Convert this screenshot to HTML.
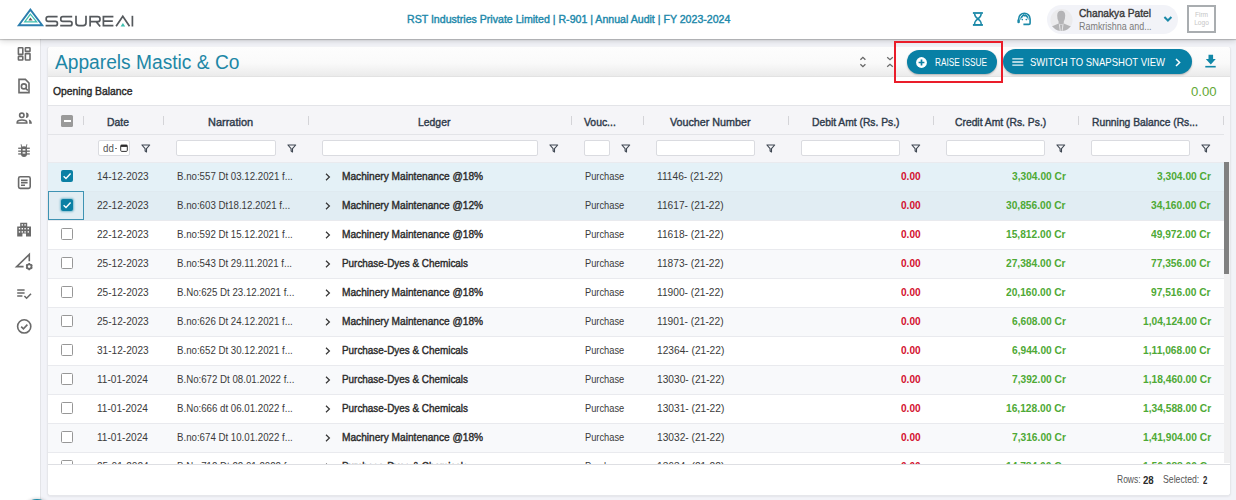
<!DOCTYPE html><html><head><meta charset="utf-8"><style>
*{margin:0;padding:0;box-sizing:border-box}
html,body{width:1236px;height:500px;overflow:hidden;background:#f2f3f8;font-family:"Liberation Sans",sans-serif;color:#333}
svg{display:block}
.a{position:absolute}
.t{position:absolute;white-space:nowrap;line-height:16px}
#hdr{left:0;top:0;width:1236px;height:39px;background:#fff;box-shadow:0 1px 1px rgba(0,0,0,.18),0 2px 6px rgba(0,0,0,.16);z-index:5}
#side{left:0;top:39px;width:41px;height:461px;background:#fff;border-right:1px solid #e3e4e8;z-index:4}
#card{left:47px;top:46px;width:1184px;height:450px;background:#fff;border:1px solid #e6e7eb;border-top-color:#f2f3f6;border-radius:4px;overflow:hidden;box-shadow:0 1px 2px rgba(0,0,0,.06)}
.ttl{left:0;top:0;width:1182px;height:30px;background:linear-gradient(#fdfdfd,#fafafa 55%,#ebebeb);border-bottom:1px solid #e2e2e2}
.btn{background:#0880a5;border-radius:13px;box-shadow:0 1px 2px rgba(0,0,0,.25)}
.hrow{background:#f5f5f8}
.sep{width:1px;height:9px;background:#d4d4d8}
.inp{height:16px;background:#fff;border:1px solid #dadbe0;border-radius:2px}
.row{height:30px;border-top:1px solid #e9eaee}
.cb{width:12px;height:12px;border:1.5px solid #979797;border-radius:1.5px;background:#fff}
.cbc{width:12px;height:12px;background:#0b80a4;border-radius:2px}
</style></head><body>
<div id="hdr" class="a">
<svg class="a" style="left:0;top:0" width="140" height="39" viewBox="0 0 140 39">
<path d="M30.4 9.6 L18.8 25.2 H42.2 Z" fill="none" stroke="#2b7eae" stroke-width="1.9" stroke-linejoin="miter"/>
<path d="M30.4 14.2 L24.8 21.8 H36.6 Z" fill="none" stroke="#3dbfae" stroke-width="1.3"/>
<path d="M30.4 17.6 L28.4 20.6 H32.6 Z" fill="#5a5a5a"/>
<g fill="none" stroke="#55595d" stroke-width="1.7">
<path d="M57.6 16.6 H48.2 Q46.2 16.6 46.2 18.6 V19.4 Q46.2 21.3 48.2 21.3 H55.4 Q57.4 21.3 57.4 23.3 V23.7 Q57.4 25.7 55.4 25.7 H45.6"/>
<path d="M72.2 16.6 H62.8 Q60.8 16.6 60.8 18.6 V19.4 Q60.8 21.3 62.8 21.3 H70 Q72 21.3 72 23.3 V23.7 Q72 25.7 70 25.7 H60.2"/>
<path d="M76 15.8 V22.8 Q76 25.7 78.9 25.7 H83.1 Q86 25.7 86 22.8 V15.8"/>
<path d="M90.1 26.5 V16.6 H97.6 Q100 16.6 100 18.9 V19.4 Q100 21.7 97.6 21.7 H90.1 M96.2 21.7 L100.2 26.5"/>
<path d="M113.4 16.6 H103.4 V25.7 H113.4 M103.4 21.1 H112.8"/>
<path d="M116.1 26.3 L122.8 16.2 L129.5 26.3"/>
<path d="M132.4 15.8 V26.5"/>
</g>
<path d="M122.9 23 L120.6 26.4 H125.2 Z" fill="#3dbfae"/>
</svg>
<div class="t" style="left:406.80px;top:10.76px;font-size:10.8px;color:#2088aa;transform:scaleX(0.9808);transform-origin:left top;-webkit-text-stroke:0.4px #2088aa;">RST Industries Private Limited | R-901 | Annual Audit | FY 2023-2024</div>
<svg class="a" style="left:970px;top:10px" width="16" height="18" viewBox="970 10 16 18"><g fill="#1b89a8"><rect x="972.9" y="12.1" width="10" height="1.8"/><rect x="972.9" y="24" width="10" height="1.9"/></g><path d="M974.6 13.8 Q974.6 16.6 977.9 18.9 Q981.2 21.2 981.2 24 M981.2 13.8 Q981.2 16.6 977.9 18.9 Q974.6 21.2 974.6 24" fill="none" stroke="#1b89a8" stroke-width="1.5"/></svg>
<svg class="a" style="left:1012px;top:8px" width="24" height="20" viewBox="1012 8 24 20"><g fill="none" stroke="#1b89a8"><path d="M1018.7 22.4 V18.9 A5.7 5.7 0 0 1 1030.1 18.9 V23.2 Q1030.1 24.4 1028.9 24.4 H1023.4" stroke-width="1.6"/><path d="M1020.6 19.6 A3.8 4.6 0 0 1 1028.2 19.6" stroke-width="0.9"/><path d="M1021.3 17.8 Q1022.4 15.6 1023.6 15 Q1024.4 16.6 1025.4 15.2 Q1026.9 15.8 1027.7 17.8" stroke-width="1.5"/></g><rect x="1017.4" y="19.3" width="2.3" height="4" rx="1.1" fill="#1b89a8"/><circle cx="1022.3" cy="19.6" r="0.8" fill="#1b89a8"/><circle cx="1026.3" cy="19.6" r="0.8" fill="#1b89a8"/></svg>
<div class="a" style="left:1047px;top:4.6px;width:131px;height:29px;background:#f2f3f8;border-radius:14.5px"></div>
<svg class="a" style="left:1049px;top:7px" width="25" height="26" viewBox="1049 7 25 26"><defs><clipPath id="av"><circle cx="1061.5" cy="20" r="11.1"/></clipPath></defs><circle cx="1061.5" cy="20" r="11.1" fill="#ebebed"/><g clip-path="url(#av)"><path fill="#b4b4b6" d="M1061.2 10.8 Q1065.2 10.8 1065.2 15.5 Q1065.2 19.5 1063.8 21.5 V23.6 L1061.2 24.5 L1058.6 23.6 V21.5 Q1057.2 19.5 1057.2 15.5 Q1057.2 10.8 1061.2 10.8 Z"/><path fill="#b4b4b6" d="M1050 27.2 L1058.6 23.6 L1061.2 25 L1063.8 23.6 L1072.6 27.2 V33 H1050 Z"/><path d="M1059.4 24.2 L1060.4 32 M1063 24.2 L1062 32" stroke="#ebebed" stroke-width="0.9"/></g></svg>
<div class="t" style="left:1078.70px;top:4.82px;font-size:11.5px;color:#383838;transform:scaleX(0.8856);transform-origin:left top;-webkit-text-stroke:0.4px #383838;">Chanakya Patel</div>
<div class="t" style="left:1078.70px;top:17.99px;font-size:11px;color:#7b7b7b;transform:scaleX(0.8133);transform-origin:left top;">Ramkrishna and...</div>
<svg class="a" style="left:1162px;top:14px" width="12" height="10" viewBox="1162 14 12 10"><path d="M1164.4 17 L1167.9 20.5 L1171.4 17" fill="none" stroke="#1b89a8" stroke-width="2"/></svg>
<div class="a" style="left:1187px;top:4.8px;width:28.7px;height:28.3px;border:2px solid #a9adb0;background:#fff"></div>
<div class="t" style="left:1190px;top:11px;width:23px;text-align:center;font-size:6.6px;line-height:8px;color:#c6c6c6">Firm<br>Logo</div>
</div>
<div id="side" class="a">
<svg class="a" style="left:0;top:0" width="41" height="461" viewBox="0 39 41 461"><g fill="none" stroke="#6a6a6a" stroke-width="1.6">
<rect x="18.4" y="47.8" width="4.4" height="6.6" rx="0.5"/><rect x="25.4" y="47.8" width="4.6" height="3.6" rx="0.5"/><rect x="18.4" y="56.4" width="4.4" height="3.6" rx="0.5"/><rect x="25.4" y="53.6" width="4.6" height="6.4" rx="0.5"/>
<path d="M19 79.4 H25.4 L29 83 V92.6 H19 Z"/><circle cx="23.9" cy="86.4" r="2.5"/><path d="M25.6 88.2 L27.8 90.4"/>
<circle cx="21.8" cy="115.3" r="2.2"/><path d="M17.2 123 V122.4 Q17.2 120 22 120 Q26.8 120 26.8 122.4 V123 Z"/>

<rect x="18.6" y="176.8" width="11.6" height="11.6" rx="1.6"/>
<path d="M21 180.4 H27.6 M21 182.8 H27.6 M21 185.2 H25"/>
<path d="M23.6 266.6 H16.6 L29.3 254.4 V261.2" stroke-linejoin="miter"/><circle cx="29.2" cy="266.6" r="2.3" stroke-width="1.8"/><path d="M29.2 263 V270.2 M26.1 264.8 L32.3 268.4 M26.1 268.4 L32.3 264.8" stroke-width="1.6" stroke-dasharray="1.3 4.6"/>
<circle cx="24.2" cy="326.4" r="6.6"/><path d="M21.2 326.6 L23.4 328.8 L27.4 324.6"/>
<path d="M17.2 290 H24.6 M17.2 293 H24.6 M17.2 296 H22.4 M24.4 296 L26.6 298.2 L31 293.8"/>
</g>
<g fill="#6a6a6a">
<path d="M21 148.2 Q21 146.2 24 146.2 Q27 146.2 27 148.2 V154 Q27 156.9 24 156.9 Q21 156.9 21 154 Z"/><rect x="18.2" y="147.6" width="11.6" height="1.3"/><rect x="18.2" y="150.5" width="11.6" height="1.3"/><rect x="18.2" y="153.3" width="11.6" height="1.3"/><path d="M21.3 144 L22.3 147 H25.7 L26.7 144 L27.4 144.4 L26.6 147.6 H21.4 L20.6 144.4 Z"/>
<path d="M25.9 112.4 A2.7 2.7 0 0 1 25.9 117.9 Q26.9 115.2 25.9 112.4 Z"/><path d="M28.8 119.6 Q31.9 120.4 31.9 123.8 H29.2 Q29.4 121.4 28.8 119.6 Z"/>
<path d="M20.2 222.8 H27.2 V226.6 H31 V236.4 H26 V233.6 H22.4 V236.4 H17.2 V226.6 H20.2 Z"/>
</g>
<g fill="#fff"><rect x="22.6" y="149.1" width="2.8" height="1.4"/><rect x="22.6" y="152.2" width="2.8" height="1.4"/>
<rect x="21.6" y="224.2" width="1.4" height="1.4"/><rect x="24.4" y="224.2" width="1.4" height="1.4"/><rect x="18.8" y="228" width="1.4" height="1.4"/><rect x="21.6" y="228" width="1.4" height="1.4"/><rect x="24.4" y="228" width="1.4" height="1.4"/><rect x="27.6" y="228" width="1.4" height="1.4"/><rect x="18.8" y="231.2" width="1.4" height="1.4"/><rect x="21.6" y="231.2" width="1.4" height="1.4"/><rect x="24.4" y="231.2" width="1.4" height="1.4"/><rect x="27.6" y="231.2" width="1.4" height="1.4"/></g>
</svg>
</div>
<div id="card" class="a">
<div class="a ttl"></div>
<div class="t" style="left:7.00px;top:7.24px;font-size:19.5px;color:#1d87a6;transform:scaleX(0.9835);transform-origin:left top;">Apparels Mastic &amp; Co</div>
<svg class="a" style="left:811px;top:9px" width="8" height="12" viewBox="0 0 8 12"><path d="M1.4 3.7 L3.9 1.3 L6.4 3.7 M1.4 8.3 L3.9 10.7 L6.4 8.3" fill="none" stroke="#666" stroke-width="1.3"/></svg>
<svg class="a" style="left:838px;top:9px" width="8" height="12" viewBox="0 0 8 12"><path d="M1.2 1.2 L4 3.8 L6.8 1.2 M1.2 10.8 L4 8.2 L6.8 10.8" fill="none" stroke="#6b6b6b" stroke-width="1.2"/></svg>
<div class="a btn" style="left:859px;top:2.5px;width:90px;height:24.2px"></div>
<svg class="a" style="left:868px;top:9.5px" width="11" height="11" viewBox="0 0 11 11"><circle cx="5.5" cy="5.5" r="5.4" fill="#fff"/><path d="M5.5 2.6 V8.4 M2.6 5.5 H8.4" stroke="#0b80a4" stroke-width="1.7"/></svg>
<div class="t" style="left:886.60px;top:7.73px;font-size:10px;color:#fff;transform:scaleX(0.8264);transform-origin:left top;">RAISE ISSUE</div>
<div class="a btn" style="left:955.4px;top:2.299999999999997px;width:188.6px;height:24.7px"></div>
<svg class="a" style="left:963.5px;top:10px" width="12" height="10" viewBox="0 0 12 10"><path d="M0.3 1.9 H11.3 M0.3 5 H11.3 M0.3 8.1 H11.3" stroke="#e6f4f8" stroke-width="1.4"/></svg>
<div class="t" style="left:982.00px;top:6.56px;font-size:10.5px;color:#fff;transform:scaleX(0.9073);transform-origin:left top;">SWITCH TO SNAPSHOT VIEW</div>
<svg class="a" style="left:1127px;top:11px" width="6" height="9" viewBox="0 0 6 9"><path d="M1 1 L4.6 4.5 L1 8" fill="none" stroke="#fff" stroke-width="1.5"/></svg>
<svg class="a" style="left:1156px;top:7px" width="14" height="15" viewBox="1204 54 14 15"><path d="M1208.5 54.8 H1213.1 V58.9 H1215.8 L1210.8 64.4 L1205.8 58.9 H1208.5 Z" fill="#1288a8"/><rect x="1205.3" y="65.9" width="10.4" height="1.6" fill="#1288a8"/></svg>
<div class="t" style="left:5.30px;top:36.02px;font-size:11.5px;color:#262626;transform:scaleX(0.9007);transform-origin:left top;-webkit-text-stroke:0.4px #262626;">Opening Balance</div>
<div class="t" style="left:1142.80px;top:36.80px;font-size:13px;color:#62a834;transform:scaleX(1.0125);transform-origin:left top;">0.00</div>
<div class="a hrow" style="left:0;top:58px;width:1182px;height:56.6px;border-top:1px solid #e3e4e8"></div>
<div class="a" style="left:0;top:87px;width:1175.6px;height:1px;background:#e3e4e8"></div>
<div class="a" style="left:13px;top:68px;width:12px;height:12px;background:#9a9a9a;border-radius:1.5px"></div>
<div class="a" style="left:15.5px;top:73.3px;width:7px;height:1.6px;background:#fff"></div>
<div class="a sep" style="left:35px;top:69px"></div>
<div class="a sep" style="left:115px;top:69px"></div>
<div class="a sep" style="left:260px;top:69px"></div>
<div class="a sep" style="left:522.5px;top:69px"></div>
<div class="a sep" style="left:595px;top:69px"></div>
<div class="a sep" style="left:740px;top:69px"></div>
<div class="a sep" style="left:885px;top:69px"></div>
<div class="a sep" style="left:1030px;top:69px"></div>
<div class="a sep" style="left:1175px;top:69px"></div>
<div class="t" style="left:59.30px;top:66.59px;font-size:11px;color:#2e3a4a;transform:scaleX(0.9436);transform-origin:left top;-webkit-text-stroke:0.4px #2e3a4a;">Date</div>
<div class="t" style="left:159.80px;top:66.59px;font-size:11px;color:#2e3a4a;transform:scaleX(0.9964);transform-origin:left top;-webkit-text-stroke:0.4px #2e3a4a;">Narration</div>
<div class="t" style="left:369.90px;top:66.59px;font-size:11px;color:#2e3a4a;transform:scaleX(0.9456);transform-origin:left top;-webkit-text-stroke:0.4px #2e3a4a;">Ledger</div>
<div class="t" style="left:536.20px;top:66.59px;font-size:11px;color:#2e3a4a;transform:scaleX(0.9447);transform-origin:left top;-webkit-text-stroke:0.4px #2e3a4a;">Vouc...</div>
<div class="t" style="left:622.00px;top:66.59px;font-size:11px;color:#2e3a4a;transform:scaleX(0.9751);transform-origin:left top;-webkit-text-stroke:0.4px #2e3a4a;">Voucher Number</div>
<div class="t" style="left:763.50px;top:66.59px;font-size:11px;color:#2e3a4a;transform:scaleX(0.9358);transform-origin:left top;-webkit-text-stroke:0.4px #2e3a4a;">Debit Amt (Rs. Ps.)</div>
<div class="t" style="left:906.50px;top:66.59px;font-size:11px;color:#2e3a4a;transform:scaleX(0.9384);transform-origin:left top;-webkit-text-stroke:0.4px #2e3a4a;">Credit Amt (Rs. Ps.)</div>
<div class="t" style="left:1043.60px;top:66.59px;font-size:11px;color:#2e3a4a;transform:scaleX(0.9352);transform-origin:left top;-webkit-text-stroke:0.4px #2e3a4a;">Running Balance (Rs...</div>
<div class="a inp" style="left:50px;top:93.30000000000001px;width:31.69999999999999px"></div>
<div class="a" style="left:93px;top:96.5px"><svg width="10" height="10" viewBox="0 0 10 10"><path d="M0.9 1 H8.7 L5.5 4.6 V7.9 L4.1 7.1 V4.6 Z" fill="none" stroke="#3f4752" stroke-width="1.1" stroke-linejoin="round"/></svg></div>
<div class="a inp" style="left:128px;top:93.30000000000001px;width:99.69999999999999px"></div>
<div class="a" style="left:239px;top:96.5px"><svg width="10" height="10" viewBox="0 0 10 10"><path d="M0.9 1 H8.7 L5.5 4.6 V7.9 L4.1 7.1 V4.6 Z" fill="none" stroke="#3f4752" stroke-width="1.1" stroke-linejoin="round"/></svg></div>
<div class="a inp" style="left:274px;top:93.30000000000001px;width:215.70000000000005px"></div>
<div class="a" style="left:501px;top:96.5px"><svg width="10" height="10" viewBox="0 0 10 10"><path d="M0.9 1 H8.7 L5.5 4.6 V7.9 L4.1 7.1 V4.6 Z" fill="none" stroke="#3f4752" stroke-width="1.1" stroke-linejoin="round"/></svg></div>
<div class="a inp" style="left:536px;top:93.30000000000001px;width:25.700000000000045px"></div>
<div class="a" style="left:573px;top:96.5px"><svg width="10" height="10" viewBox="0 0 10 10"><path d="M0.9 1 H8.7 L5.5 4.6 V7.9 L4.1 7.1 V4.6 Z" fill="none" stroke="#3f4752" stroke-width="1.1" stroke-linejoin="round"/></svg></div>
<div class="a inp" style="left:608px;top:93.30000000000001px;width:98.70000000000005px"></div>
<div class="a" style="left:718px;top:96.5px"><svg width="10" height="10" viewBox="0 0 10 10"><path d="M0.9 1 H8.7 L5.5 4.6 V7.9 L4.1 7.1 V4.6 Z" fill="none" stroke="#3f4752" stroke-width="1.1" stroke-linejoin="round"/></svg></div>
<div class="a inp" style="left:753px;top:93.30000000000001px;width:98.70000000000005px"></div>
<div class="a" style="left:863px;top:96.5px"><svg width="10" height="10" viewBox="0 0 10 10"><path d="M0.9 1 H8.7 L5.5 4.6 V7.9 L4.1 7.1 V4.6 Z" fill="none" stroke="#3f4752" stroke-width="1.1" stroke-linejoin="round"/></svg></div>
<div class="a inp" style="left:898px;top:93.30000000000001px;width:98.70000000000005px"></div>
<div class="a" style="left:1008px;top:96.5px"><svg width="10" height="10" viewBox="0 0 10 10"><path d="M0.9 1 H8.7 L5.5 4.6 V7.9 L4.1 7.1 V4.6 Z" fill="none" stroke="#3f4752" stroke-width="1.1" stroke-linejoin="round"/></svg></div>
<div class="a inp" style="left:1043px;top:93.30000000000001px;width:98.70000000000005px"></div>
<div class="a" style="left:1153px;top:96.5px"><svg width="10" height="10" viewBox="0 0 10 10"><path d="M0.9 1 H8.7 L5.5 4.6 V7.9 L4.1 7.1 V4.6 Z" fill="none" stroke="#3f4752" stroke-width="1.1" stroke-linejoin="round"/></svg></div>
<div class="t" style="left:54.80px;top:92.99px;font-size:11px;color:#555;transform:scaleX(0.8845);transform-origin:left top;">dd</div>
<div class="a" style="left:67.2px;top:101px;width:2px;height:1px;background:#777"></div>
<svg class="a" style="left:72px;top:97px" width="8" height="8" viewBox="0 0 8 8"><rect x="0.7" y="1.2" width="6.6" height="6.2" rx="1" fill="none" stroke="#333" stroke-width="1"/><rect x="0.7" y="0.8" width="6.6" height="2.1" fill="#2a2a2a"/></svg>
<div class="a row" style="left:0;top:114.60px;width:1176px;background:#e4f1f7"></div>
<div class="a cbc" style="left:13px;top:122.90px"></div>
<svg class="a" style="left:13px;top:122.90px" width="12" height="12" viewBox="0 0 12 12"><path d="M2.6 6.2 L5 8.4 L9.6 3.6" fill="none" stroke="#fff" stroke-width="1.4"/></svg>
<div class="t" style="left:49.20px;top:120.99px;font-size:11px;color:#3a3a3a;transform:scaleX(0.9171);transform-origin:left top;">14-12-2023</div>
<div class="t" style="left:129.00px;top:120.99px;font-size:11px;color:#3a3a3a;transform:scaleX(0.8806);transform-origin:left top;">B.no:557 Dt 03.12.2021 f...</div>
<svg class="a" style="left:276.5px;top:125.60px" width="6" height="8" viewBox="0 0 6 8"><path d="M1 0.8 L4.4 4 L1 7.2" fill="none" stroke="#333" stroke-width="1.2"/></svg>
<div class="t" style="left:294.40px;top:120.99px;font-size:11px;color:#2a2a2a;transform:scaleX(0.9222);transform-origin:left top;-webkit-text-stroke:0.4px #2a2a2a;">Machinery Maintenance @18%</div>
<div class="t" style="left:536.70px;top:120.99px;font-size:11px;color:#3a3a3a;transform:scaleX(0.8445);transform-origin:left top;">Purchase</div>
<div class="t" style="left:609.00px;top:120.99px;font-size:11px;color:#3a3a3a;transform:scaleX(0.9253);transform-origin:left top;">11146- (21-22)</div>
<div class="t" style="left:852.70px;top:120.99px;font-size:11px;font-weight:700;color:#d3102e;transform:scaleX(0.9161);transform-origin:left top;">0.00</div>
<div class="t" style="left:963.90px;top:120.99px;font-size:11px;font-weight:700;color:#4ea935;transform:scaleX(0.9280);transform-origin:left top;">3,304.00 Cr</div>
<div class="t" style="left:1108.70px;top:120.99px;font-size:11px;font-weight:700;color:#4ea935;transform:scaleX(0.9280);transform-origin:left top;">3,304.00 Cr</div>
<div class="a row" style="left:0;top:143.63px;width:1176px;background:#e1edf3;border-top-color:#dfeaf0"></div>
<div class="a cbc" style="left:13px;top:151.93px;box-shadow:0 0 2px 1px rgba(11,128,164,.45)"></div>
<svg class="a" style="left:13px;top:151.93px" width="12" height="12" viewBox="0 0 12 12"><path d="M2.6 6.2 L5 8.4 L9.6 3.6" fill="none" stroke="#fff" stroke-width="1.4"/></svg>
<div class="t" style="left:49.20px;top:150.02px;font-size:11px;color:#3a3a3a;transform:scaleX(0.9171);transform-origin:left top;">22-12-2023</div>
<div class="t" style="left:129.00px;top:150.02px;font-size:11px;color:#3a3a3a;transform:scaleX(0.8806);transform-origin:left top;">B.no:603 Dt18.12.2021 f...</div>
<svg class="a" style="left:276.5px;top:154.63px" width="6" height="8" viewBox="0 0 6 8"><path d="M1 0.8 L4.4 4 L1 7.2" fill="none" stroke="#333" stroke-width="1.2"/></svg>
<div class="t" style="left:294.40px;top:150.02px;font-size:11px;color:#2a2a2a;transform:scaleX(0.9222);transform-origin:left top;-webkit-text-stroke:0.4px #2a2a2a;">Machinery Maintenance @12%</div>
<div class="t" style="left:536.70px;top:150.02px;font-size:11px;color:#3a3a3a;transform:scaleX(0.8445);transform-origin:left top;">Purchase</div>
<div class="t" style="left:609.00px;top:150.02px;font-size:11px;color:#3a3a3a;transform:scaleX(0.9253);transform-origin:left top;">11617- (21-22)</div>
<div class="t" style="left:852.70px;top:150.02px;font-size:11px;font-weight:700;color:#d3102e;transform:scaleX(0.9161);transform-origin:left top;">0.00</div>
<div class="t" style="left:958.18px;top:150.02px;font-size:11px;font-weight:700;color:#4ea935;transform:scaleX(0.9280);transform-origin:left top;">30,856.00 Cr</div>
<div class="t" style="left:1102.98px;top:150.02px;font-size:11px;font-weight:700;color:#4ea935;transform:scaleX(0.9280);transform-origin:left top;">34,160.00 Cr</div>
<div class="a row" style="left:0;top:172.66px;width:1176px;background:#ffffff"></div>
<div class="a cb" style="left:13px;top:180.96px"></div>
<div class="t" style="left:49.20px;top:179.05px;font-size:11px;color:#3a3a3a;transform:scaleX(0.9171);transform-origin:left top;">22-12-2023</div>
<div class="t" style="left:129.00px;top:179.05px;font-size:11px;color:#3a3a3a;transform:scaleX(0.8806);transform-origin:left top;">B.no:592 Dt 15.12.2021 f...</div>
<svg class="a" style="left:276.5px;top:183.66px" width="6" height="8" viewBox="0 0 6 8"><path d="M1 0.8 L4.4 4 L1 7.2" fill="none" stroke="#333" stroke-width="1.2"/></svg>
<div class="t" style="left:294.40px;top:179.05px;font-size:11px;color:#2a2a2a;transform:scaleX(0.9222);transform-origin:left top;-webkit-text-stroke:0.4px #2a2a2a;">Machinery Maintenance @18%</div>
<div class="t" style="left:536.70px;top:179.05px;font-size:11px;color:#3a3a3a;transform:scaleX(0.8445);transform-origin:left top;">Purchase</div>
<div class="t" style="left:609.00px;top:179.05px;font-size:11px;color:#3a3a3a;transform:scaleX(0.9253);transform-origin:left top;">11618- (21-22)</div>
<div class="t" style="left:852.70px;top:179.05px;font-size:11px;font-weight:700;color:#d3102e;transform:scaleX(0.9161);transform-origin:left top;">0.00</div>
<div class="t" style="left:958.18px;top:179.05px;font-size:11px;font-weight:700;color:#4ea935;transform:scaleX(0.9280);transform-origin:left top;">15,812.00 Cr</div>
<div class="t" style="left:1102.98px;top:179.05px;font-size:11px;font-weight:700;color:#4ea935;transform:scaleX(0.9280);transform-origin:left top;">49,972.00 Cr</div>
<div class="a row" style="left:0;top:201.69px;width:1176px;background:#f8f9fb"></div>
<div class="a cb" style="left:13px;top:209.99px"></div>
<div class="t" style="left:49.20px;top:208.08px;font-size:11px;color:#3a3a3a;transform:scaleX(0.9171);transform-origin:left top;">25-12-2023</div>
<div class="t" style="left:129.00px;top:208.08px;font-size:11px;color:#3a3a3a;transform:scaleX(0.8806);transform-origin:left top;">B.no:543 Dt 29.11.2021 f...</div>
<svg class="a" style="left:276.5px;top:212.69px" width="6" height="8" viewBox="0 0 6 8"><path d="M1 0.8 L4.4 4 L1 7.2" fill="none" stroke="#333" stroke-width="1.2"/></svg>
<div class="t" style="left:294.40px;top:208.08px;font-size:11px;color:#2a2a2a;transform:scaleX(0.9002);transform-origin:left top;-webkit-text-stroke:0.4px #2a2a2a;">Purchase-Dyes &amp; Chemicals</div>
<div class="t" style="left:536.70px;top:208.08px;font-size:11px;color:#3a3a3a;transform:scaleX(0.8445);transform-origin:left top;">Purchase</div>
<div class="t" style="left:609.00px;top:208.08px;font-size:11px;color:#3a3a3a;transform:scaleX(0.9253);transform-origin:left top;">11873- (21-22)</div>
<div class="t" style="left:852.70px;top:208.08px;font-size:11px;font-weight:700;color:#d3102e;transform:scaleX(0.9161);transform-origin:left top;">0.00</div>
<div class="t" style="left:958.18px;top:208.08px;font-size:11px;font-weight:700;color:#4ea935;transform:scaleX(0.9280);transform-origin:left top;">27,384.00 Cr</div>
<div class="t" style="left:1102.98px;top:208.08px;font-size:11px;font-weight:700;color:#4ea935;transform:scaleX(0.9280);transform-origin:left top;">77,356.00 Cr</div>
<div class="a row" style="left:0;top:230.72px;width:1176px;background:#ffffff"></div>
<div class="a cb" style="left:13px;top:239.02px"></div>
<div class="t" style="left:49.20px;top:237.11px;font-size:11px;color:#3a3a3a;transform:scaleX(0.9171);transform-origin:left top;">25-12-2023</div>
<div class="t" style="left:129.00px;top:237.11px;font-size:11px;color:#3a3a3a;transform:scaleX(0.8806);transform-origin:left top;">B.No:625 Dt 23.12.2021 f...</div>
<svg class="a" style="left:276.5px;top:241.72px" width="6" height="8" viewBox="0 0 6 8"><path d="M1 0.8 L4.4 4 L1 7.2" fill="none" stroke="#333" stroke-width="1.2"/></svg>
<div class="t" style="left:294.40px;top:237.11px;font-size:11px;color:#2a2a2a;transform:scaleX(0.9222);transform-origin:left top;-webkit-text-stroke:0.4px #2a2a2a;">Machinery Maintenance @18%</div>
<div class="t" style="left:536.70px;top:237.11px;font-size:11px;color:#3a3a3a;transform:scaleX(0.8445);transform-origin:left top;">Purchase</div>
<div class="t" style="left:609.00px;top:237.11px;font-size:11px;color:#3a3a3a;transform:scaleX(0.9253);transform-origin:left top;">11900- (21-22)</div>
<div class="t" style="left:852.70px;top:237.11px;font-size:11px;font-weight:700;color:#d3102e;transform:scaleX(0.9161);transform-origin:left top;">0.00</div>
<div class="t" style="left:958.18px;top:237.11px;font-size:11px;font-weight:700;color:#4ea935;transform:scaleX(0.9280);transform-origin:left top;">20,160.00 Cr</div>
<div class="t" style="left:1102.98px;top:237.11px;font-size:11px;font-weight:700;color:#4ea935;transform:scaleX(0.9280);transform-origin:left top;">97,516.00 Cr</div>
<div class="a row" style="left:0;top:259.75px;width:1176px;background:#f8f9fb"></div>
<div class="a cb" style="left:13px;top:268.05px"></div>
<div class="t" style="left:49.20px;top:266.14px;font-size:11px;color:#3a3a3a;transform:scaleX(0.9171);transform-origin:left top;">25-12-2023</div>
<div class="t" style="left:129.00px;top:266.14px;font-size:11px;color:#3a3a3a;transform:scaleX(0.8806);transform-origin:left top;">B.no:626 Dt 24.12.2021 f...</div>
<svg class="a" style="left:276.5px;top:270.75px" width="6" height="8" viewBox="0 0 6 8"><path d="M1 0.8 L4.4 4 L1 7.2" fill="none" stroke="#333" stroke-width="1.2"/></svg>
<div class="t" style="left:294.40px;top:266.14px;font-size:11px;color:#2a2a2a;transform:scaleX(0.9222);transform-origin:left top;-webkit-text-stroke:0.4px #2a2a2a;">Machinery Maintenance @18%</div>
<div class="t" style="left:536.70px;top:266.14px;font-size:11px;color:#3a3a3a;transform:scaleX(0.8445);transform-origin:left top;">Purchase</div>
<div class="t" style="left:609.00px;top:266.14px;font-size:11px;color:#3a3a3a;transform:scaleX(0.9253);transform-origin:left top;">11901- (21-22)</div>
<div class="t" style="left:852.70px;top:266.14px;font-size:11px;font-weight:700;color:#d3102e;transform:scaleX(0.9161);transform-origin:left top;">0.00</div>
<div class="t" style="left:963.90px;top:266.14px;font-size:11px;font-weight:700;color:#4ea935;transform:scaleX(0.9280);transform-origin:left top;">6,608.00 Cr</div>
<div class="t" style="left:1094.51px;top:266.14px;font-size:11px;font-weight:700;color:#4ea935;transform:scaleX(0.9280);transform-origin:left top;">1,04,124.00 Cr</div>
<div class="a row" style="left:0;top:288.78px;width:1176px;background:#ffffff"></div>
<div class="a cb" style="left:13px;top:297.08px"></div>
<div class="t" style="left:49.20px;top:295.17px;font-size:11px;color:#3a3a3a;transform:scaleX(0.9171);transform-origin:left top;">31-12-2023</div>
<div class="t" style="left:129.00px;top:295.17px;font-size:11px;color:#3a3a3a;transform:scaleX(0.8806);transform-origin:left top;">B.no:652 Dt 30.12.2021 f...</div>
<svg class="a" style="left:276.5px;top:299.78px" width="6" height="8" viewBox="0 0 6 8"><path d="M1 0.8 L4.4 4 L1 7.2" fill="none" stroke="#333" stroke-width="1.2"/></svg>
<div class="t" style="left:294.40px;top:295.17px;font-size:11px;color:#2a2a2a;transform:scaleX(0.9002);transform-origin:left top;-webkit-text-stroke:0.4px #2a2a2a;">Purchase-Dyes &amp; Chemicals</div>
<div class="t" style="left:536.70px;top:295.17px;font-size:11px;color:#3a3a3a;transform:scaleX(0.8445);transform-origin:left top;">Purchase</div>
<div class="t" style="left:609.00px;top:295.17px;font-size:11px;color:#3a3a3a;transform:scaleX(0.9253);transform-origin:left top;">12364- (21-22)</div>
<div class="t" style="left:852.70px;top:295.17px;font-size:11px;font-weight:700;color:#d3102e;transform:scaleX(0.9161);transform-origin:left top;">0.00</div>
<div class="t" style="left:963.90px;top:295.17px;font-size:11px;font-weight:700;color:#4ea935;transform:scaleX(0.9280);transform-origin:left top;">6,944.00 Cr</div>
<div class="t" style="left:1095.07px;top:295.17px;font-size:11px;font-weight:700;color:#4ea935;transform:scaleX(0.9280);transform-origin:left top;">1,11,068.00 Cr</div>
<div class="a row" style="left:0;top:317.81px;width:1176px;background:#f8f9fb"></div>
<div class="a cb" style="left:13px;top:326.11px"></div>
<div class="t" style="left:49.20px;top:324.20px;font-size:11px;color:#3a3a3a;transform:scaleX(0.9171);transform-origin:left top;">11-01-2024</div>
<div class="t" style="left:129.00px;top:324.20px;font-size:11px;color:#3a3a3a;transform:scaleX(0.8806);transform-origin:left top;">B.No:672 Dt 08.01.2022 f...</div>
<svg class="a" style="left:276.5px;top:328.81px" width="6" height="8" viewBox="0 0 6 8"><path d="M1 0.8 L4.4 4 L1 7.2" fill="none" stroke="#333" stroke-width="1.2"/></svg>
<div class="t" style="left:294.40px;top:324.20px;font-size:11px;color:#2a2a2a;transform:scaleX(0.9002);transform-origin:left top;-webkit-text-stroke:0.4px #2a2a2a;">Purchase-Dyes &amp; Chemicals</div>
<div class="t" style="left:536.70px;top:324.20px;font-size:11px;color:#3a3a3a;transform:scaleX(0.8445);transform-origin:left top;">Purchase</div>
<div class="t" style="left:609.00px;top:324.20px;font-size:11px;color:#3a3a3a;transform:scaleX(0.9253);transform-origin:left top;">13030- (21-22)</div>
<div class="t" style="left:852.70px;top:324.20px;font-size:11px;font-weight:700;color:#d3102e;transform:scaleX(0.9161);transform-origin:left top;">0.00</div>
<div class="t" style="left:963.90px;top:324.20px;font-size:11px;font-weight:700;color:#4ea935;transform:scaleX(0.9280);transform-origin:left top;">7,392.00 Cr</div>
<div class="t" style="left:1094.51px;top:324.20px;font-size:11px;font-weight:700;color:#4ea935;transform:scaleX(0.9280);transform-origin:left top;">1,18,460.00 Cr</div>
<div class="a row" style="left:0;top:346.84px;width:1176px;background:#ffffff"></div>
<div class="a cb" style="left:13px;top:355.14px"></div>
<div class="t" style="left:49.20px;top:353.23px;font-size:11px;color:#3a3a3a;transform:scaleX(0.9171);transform-origin:left top;">11-01-2024</div>
<div class="t" style="left:129.00px;top:353.23px;font-size:11px;color:#3a3a3a;transform:scaleX(0.8806);transform-origin:left top;">B.No:666 dt 06.01.2022 f...</div>
<svg class="a" style="left:276.5px;top:357.84px" width="6" height="8" viewBox="0 0 6 8"><path d="M1 0.8 L4.4 4 L1 7.2" fill="none" stroke="#333" stroke-width="1.2"/></svg>
<div class="t" style="left:294.40px;top:353.23px;font-size:11px;color:#2a2a2a;transform:scaleX(0.9002);transform-origin:left top;-webkit-text-stroke:0.4px #2a2a2a;">Purchase-Dyes &amp; Chemicals</div>
<div class="t" style="left:536.70px;top:353.23px;font-size:11px;color:#3a3a3a;transform:scaleX(0.8445);transform-origin:left top;">Purchase</div>
<div class="t" style="left:609.00px;top:353.23px;font-size:11px;color:#3a3a3a;transform:scaleX(0.9253);transform-origin:left top;">13031- (21-22)</div>
<div class="t" style="left:852.70px;top:353.23px;font-size:11px;font-weight:700;color:#d3102e;transform:scaleX(0.9161);transform-origin:left top;">0.00</div>
<div class="t" style="left:958.18px;top:353.23px;font-size:11px;font-weight:700;color:#4ea935;transform:scaleX(0.9280);transform-origin:left top;">16,128.00 Cr</div>
<div class="t" style="left:1094.51px;top:353.23px;font-size:11px;font-weight:700;color:#4ea935;transform:scaleX(0.9280);transform-origin:left top;">1,34,588.00 Cr</div>
<div class="a row" style="left:0;top:375.87px;width:1176px;background:#f8f9fb"></div>
<div class="a cb" style="left:13px;top:384.17px"></div>
<div class="t" style="left:49.20px;top:382.26px;font-size:11px;color:#3a3a3a;transform:scaleX(0.9171);transform-origin:left top;">11-01-2024</div>
<div class="t" style="left:129.00px;top:382.26px;font-size:11px;color:#3a3a3a;transform:scaleX(0.8806);transform-origin:left top;">B.no:674 Dt 10.01.2022 f...</div>
<svg class="a" style="left:276.5px;top:386.87px" width="6" height="8" viewBox="0 0 6 8"><path d="M1 0.8 L4.4 4 L1 7.2" fill="none" stroke="#333" stroke-width="1.2"/></svg>
<div class="t" style="left:294.40px;top:382.26px;font-size:11px;color:#2a2a2a;transform:scaleX(0.9222);transform-origin:left top;-webkit-text-stroke:0.4px #2a2a2a;">Machinery Maintenance @18%</div>
<div class="t" style="left:536.70px;top:382.26px;font-size:11px;color:#3a3a3a;transform:scaleX(0.8445);transform-origin:left top;">Purchase</div>
<div class="t" style="left:609.00px;top:382.26px;font-size:11px;color:#3a3a3a;transform:scaleX(0.9253);transform-origin:left top;">13032- (21-22)</div>
<div class="t" style="left:852.70px;top:382.26px;font-size:11px;font-weight:700;color:#d3102e;transform:scaleX(0.9161);transform-origin:left top;">0.00</div>
<div class="t" style="left:963.90px;top:382.26px;font-size:11px;font-weight:700;color:#4ea935;transform:scaleX(0.9280);transform-origin:left top;">7,316.00 Cr</div>
<div class="t" style="left:1094.51px;top:382.26px;font-size:11px;font-weight:700;color:#4ea935;transform:scaleX(0.9280);transform-origin:left top;">1,41,904.00 Cr</div>
<div class="a row" style="left:0;top:404.90px;width:1176px;background:#ffffff"></div>
<div class="a cb" style="left:13px;top:413.20px"></div>
<div class="t" style="left:49.20px;top:411.29px;font-size:11px;color:#3a3a3a;transform:scaleX(0.9171);transform-origin:left top;">25-01-2024</div>
<div class="t" style="left:129.00px;top:411.29px;font-size:11px;color:#3a3a3a;transform:scaleX(0.8806);transform-origin:left top;">B.No:712 Dt 22.01.2022 f...</div>
<svg class="a" style="left:276.5px;top:415.90px" width="6" height="8" viewBox="0 0 6 8"><path d="M1 0.8 L4.4 4 L1 7.2" fill="none" stroke="#333" stroke-width="1.2"/></svg>
<div class="t" style="left:294.40px;top:411.29px;font-size:11px;color:#2a2a2a;transform:scaleX(0.9002);transform-origin:left top;-webkit-text-stroke:0.4px #2a2a2a;">Purchase-Dyes &amp; Chemicals</div>
<div class="t" style="left:536.70px;top:411.29px;font-size:11px;color:#3a3a3a;transform:scaleX(0.8445);transform-origin:left top;">Purchase</div>
<div class="t" style="left:609.00px;top:411.29px;font-size:11px;color:#3a3a3a;transform:scaleX(0.9253);transform-origin:left top;">13634- (21-22)</div>
<div class="t" style="left:852.70px;top:411.29px;font-size:11px;font-weight:700;color:#d3102e;transform:scaleX(0.9161);transform-origin:left top;">0.00</div>
<div class="t" style="left:958.18px;top:411.29px;font-size:11px;font-weight:700;color:#4ea935;transform:scaleX(0.9280);transform-origin:left top;">14,784.00 Cr</div>
<div class="t" style="left:1094.51px;top:411.29px;font-size:11px;font-weight:700;color:#4ea935;transform:scaleX(0.9280);transform-origin:left top;">1,56,688.00 Cr</div>
<div class="a" style="left:0;top:143.63px;width:36px;height:29.2px;border:1px solid #3e93b3"></div>
<div class="a" style="left:1175.8px;top:114.6px;width:6px;height:301.4px;background:#f0f0f1"></div>
<div class="a" style="left:1175.8px;top:114.6px;width:5.7px;height:112.4px;background:#808080"></div>
<div class="a" style="left:0;top:416.9px;width:1184px;height:40px;background:#fff;border-top:1px solid #dedfe3"></div>
<div class="t" style="left:1069.10px;top:425.03px;font-size:10.3px;color:#555;transform:scaleX(0.8242);transform-origin:left top;">Rows:</div>
<div class="t" style="left:1094.90px;top:424.96px;font-size:10.5px;font-weight:700;color:#2a2a2a;transform:scaleX(0.9181);transform-origin:left top;">28</div>
<div class="t" style="left:1114.70px;top:425.03px;font-size:10.3px;color:#555;transform:scaleX(0.8451);transform-origin:left top;">Selected:</div>
<div class="t" style="left:1154.50px;top:424.96px;font-size:10.5px;font-weight:700;color:#2a2a2a;transform:scaleX(0.7379);transform-origin:left top;">2</div>
</div>
<div class="a" style="left:894px;top:41px;width:109px;height:41.5px;border:2px solid #ea1d2a;z-index:7"></div>
<div class="a" style="left:23px;top:498.6px;width:28px;height:28px;border-radius:14px;background:#1b8aa8;box-shadow:0 -1px 3px rgba(0,0,0,.15);z-index:6"></div>
</body></html>
